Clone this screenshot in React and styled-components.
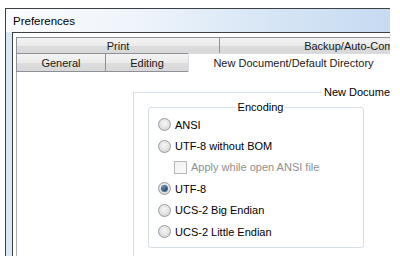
import React from "react";
import styled, { createGlobalStyle, css } from "styled-components";

const GlobalStyle = createGlobalStyle`
  html, body { margin: 0; padding: 0; background: #ffffff; }
  body { font-family: "Liberation Sans", "Noto Sans", sans-serif; font-size: 11px; color: #000; }
  * { box-sizing: border-box; }
`;

const Page = styled.div`
  width: 400px;
  height: 262px;
  padding: 8px 0 0 5px;
  overflow: hidden;
`;

const Window = styled.div`
  width: 385px;
  height: 248px;
  border-top: 1px solid #3c3f44;
  border-left: 1px solid #3c3f44;
  display: flex;
  flex-direction: column;
  overflow: hidden;
  background: #dce7f4;
`;

const TitleBar = styled.div`
  height: 23px;
  flex: none;
  display: flex;
  align-items: center;
  padding-left: 7px;
  background: linear-gradient(90deg, #fbfcfe 0%, #eef4fb 35%, #d6e5f5 70%, #c6daf1 100%);
  font-size: 11.5px;
  color: #000;
`;

const Body = styled.div`
  flex: 1;
  display: flex;
  padding-left: 6px;
  min-height: 0;
`;

const Client = styled.div`
  flex: 1;
  display: flex;
  flex-direction: column;
  border-top: 1px solid #3c3f44;
  border-left: 1px solid #3c3f44;
  background: #ffffff;
  padding: 4px 0 0 3px;
  min-width: 0;
  overflow: hidden;
`;

const TabRow = styled.div`
  display: flex;
  flex: none;
  height: ${(p) => p.$h}px;
`;

const Tab = styled.div`
  flex: none;
  width: ${(p) => p.$w}px;
  height: 100%;
  margin-left: -1px;
  &:first-child { margin-left: 0; }
  display: flex;
  align-items: center;
  justify-content: center;
  white-space: nowrap;
  color: #1a1a1a;
  border: 1px solid #8d9097;
  border-bottom: none;
  background: linear-gradient(180deg, #f3f3f3 0%, #ebebeb 50%, #dddddd 51%, #d8d8d8 100%);
  ${(p) =>
    p.$active &&
    css`
      border-color: #d9dde3;
      background: #ffffff;
    `}
  ${(p) =>
    p.$bottom &&
    !p.$active &&
    css`
      border-bottom: 1px solid #8d9097;
      padding-top: 1px;
    `}
`;

const Panel = styled.div`
  flex: 1;
  border-left: 1px solid #a9acb2;
  padding: 13px 0 0 116px;
  min-height: 0;
`;

const Group = styled.fieldset`
  margin: 0;
  min-width: 0;
  width: ${(p) => p.$w}px;
  height: ${(p) => p.$h}px;
  border: 1px solid #d5dfe5;
  border-radius: ${(p) => (p.$round ? 3 : 0)}px;
  padding: ${(p) => p.$pad};
`;

const Legend = styled.legend`
  padding: 0 2px;
  line-height: 14px;
  font-size: 11px;
  color: #000;
  ${(p) =>
    p.$center
      ? css`
          margin: 0 auto;
        `
      : css`
          margin-left: ${p.$offset}px;
        `}
`;

const Options = styled.div`
  display: flex;
  flex-direction: column;
`;

const Row = styled.label`
  display: flex;
  align-items: center;
  height: 21.4px;
  gap: 4px;
  padding-left: ${(p) => (p.$indent ? 16 : 0)}px;
  color: ${(p) => (p.$disabled ? "#8f8f8f" : "#000")};
  white-space: nowrap;
`;

const Radio = styled.span`
  flex: none;
  width: 13px;
  height: 13px;
  border-radius: 50%;
  border: 1px solid #9b9b9b;
  background: radial-gradient(circle at 50% 40%, #f6f6f6 0%, #e2e2e2 55%, #c9c9c9 100%);
  display: flex;
  align-items: center;
  justify-content: center;
  &::after {
    content: "";
    width: 5px;
    height: 5px;
    border-radius: 50%;
    display: ${(p) => (p.$checked ? "block" : "none")};
    background: radial-gradient(circle at 40% 35%, #6c9acb 0%, #274a73 55%, #0e1f33 100%);
    box-shadow: 0 0 0 1px #4f6d8e;
  }
`;

const Check = styled.span`
  flex: none;
  width: 13px;
  height: 13px;
  border: 1px solid #b7b7b7;
  background: linear-gradient(135deg, #f1f1f1 0%, #fbfbfb 100%);
`;

const options = [
  { label: "ANSI" },
  { label: "UTF-8 without BOM" },
  { label: "Apply while open ANSI file", check: true, disabled: true },
  { label: "UTF-8", checked: true },
  { label: "UCS-2 Big Endian" },
  { label: "UCS-2 Little Endian" },
];

export default function App() {
  return (
    <>
      <GlobalStyle />
      <Page>
        <Window>
          <TitleBar>Preferences</TitleBar>
          <Body>
            <Client>
              <TabRow $h={16}>
                <Tab $w={204}>Print</Tab>
                <Tab $w={292}>Backup/Auto-Completion</Tab>
              </TabRow>
              <TabRow $h={19}>
                <Tab $w={90} $bottom>General</Tab>
                <Tab $w={84} $bottom>Editing</Tab>
                <Tab $w={211} $bottom $active>New Document/Default Directory</Tab>
              </TabRow>
              <Panel>
                <Group $w={454} $h={200} $pad="1px 0 0 14px">
                  <Legend $offset={174}>New Document</Legend>
                  <Group $w={216} $h={148} $round $pad="0 0 0 9px">
                    <Legend $center>Encoding</Legend>
                    <Options>
                      {options.map((o) => (
                        <Row key={o.label} $indent={o.check} $disabled={o.disabled}>
                          {o.check ? <Check /> : <Radio $checked={o.checked} />}
                          {o.label}
                        </Row>
                      ))}
                    </Options>
                  </Group>
                </Group>
              </Panel>
            </Client>
          </Body>
        </Window>
      </Page>
    </>
  );
}
